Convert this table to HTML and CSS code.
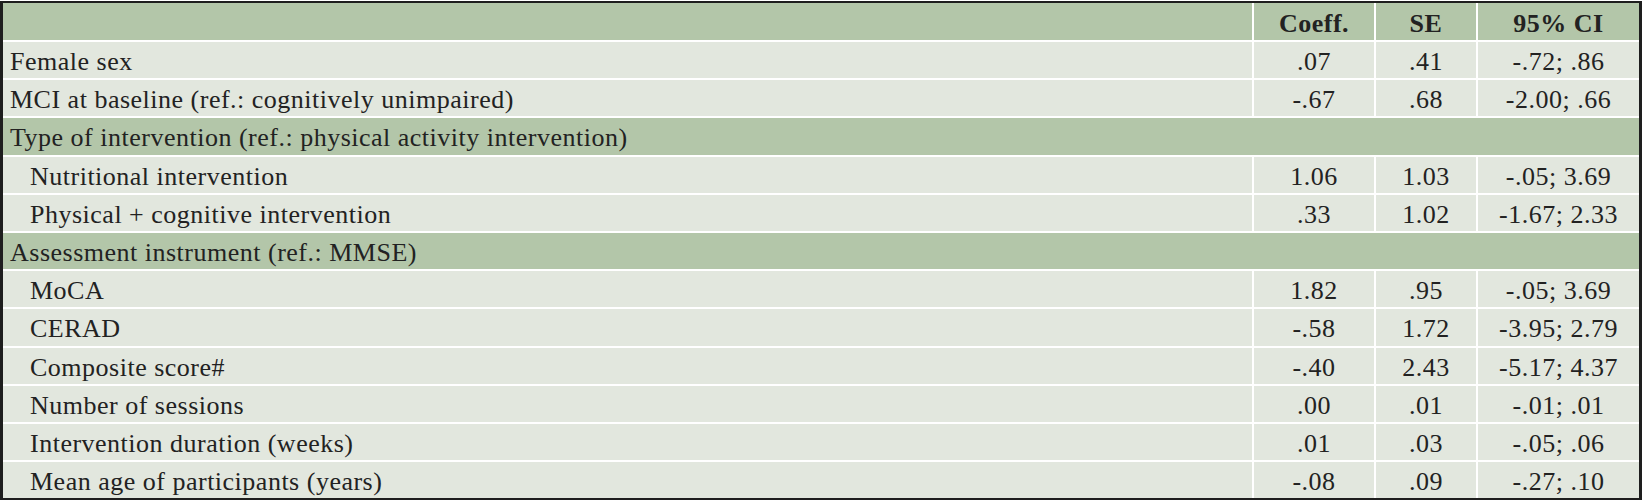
FILE: index.html
```html
<!DOCTYPE html>
<html>
<head>
<meta charset="utf-8">
<link rel="stylesheet" href="styles.css">
</head>
<body>
<div class="frame">
<table class="tbl">
  <colgroup>
    <col class="c-label">
    <col class="c-coef">
    <col class="c-se">
    <col class="c-ci">
  </colgroup>
  <thead>
    <tr class="head">
      <th class="label"></th>
      <th>Coeff.</th>
      <th>SE</th>
      <th>95% CI</th>
    </tr>
  </thead>
  <tbody>
    <tr><td class="label">Female sex</td><td>.07</td><td>.41</td><td>-.72; .86</td></tr>
    <tr><td class="label">MCI at baseline (ref.: cognitively unimpaired)</td><td>-.67</td><td>.68</td><td>-2.00; .66</td></tr>
    <tr class="section"><td class="label" colspan="4">Type of intervention (ref.: physical activity intervention)</td></tr>
    <tr><td class="label sub">Nutritional intervention</td><td>1.06</td><td>1.03</td><td>-.05; 3.69</td></tr>
    <tr><td class="label sub">Physical + cognitive intervention</td><td>.33</td><td>1.02</td><td>-1.67; 2.33</td></tr>
    <tr class="section"><td class="label" colspan="4">Assessment instrument (ref.: MMSE)</td></tr>
    <tr><td class="label sub">MoCA</td><td>1.82</td><td>.95</td><td>-.05; 3.69</td></tr>
    <tr><td class="label sub">CERAD</td><td>-.58</td><td>1.72</td><td>-3.95; 2.79</td></tr>
    <tr><td class="label sub">Composite score#</td><td>-.40</td><td>2.43</td><td>-5.17; 4.37</td></tr>
    <tr><td class="label sub">Number of sessions</td><td>.00</td><td>.01</td><td>-.01; .01</td></tr>
    <tr><td class="label sub">Intervention duration (weeks)</td><td>.01</td><td>.03</td><td>-.05; .06</td></tr>
    <tr><td class="label sub">Mean age of participants (years)</td><td>-.08</td><td>.09</td><td>-.27; .10</td></tr>
  </tbody>
</table>
</div>
</body>
</html>
```

FILE: styles.css
```css
html, body {
  margin: 0;
  padding: 0;
  background: #ffffff;
}

body {
  padding-top: 1px;
  font-family: "Liberation Serif", "Times New Roman", serif;
  font-size: 26px;
  letter-spacing: 0.5px;
  color: #222222;
}

.frame {
  width: 1642px;
  box-sizing: border-box;
  border-top: 2px solid #1e1e1e;
  border-left: 3px solid #1e1e1e;
  border-right: 3px solid #1e1e1e;
  border-bottom: 2px solid #1e1e1e;
}

.tbl {
  width: 100%;
  border-collapse: separate;
  border-spacing: 0;
  table-layout: fixed;
}

.c-label { width: 1249px; }
.c-coef { width: 122px; }
.c-se { width: 102px; }
.c-ci { width: 163px; }

.tbl th,
.tbl td {
  background: #e2e7de;
  height: 36.2px;
  box-sizing: border-box;
  padding: 4px 0 0 0;
  line-height: 32px;
  text-align: center;
  font-weight: normal;
  white-space: nowrap;
  border-top: 2px solid #ffffff;
  border-left: 2px solid #ffffff;
}

.tbl th.label,
.tbl td.label {
  border-left: none;
  text-align: left;
  padding-left: 7px;
}

.tbl td.sub {
  padding-left: 27px;
}

.head th {
  background: #b3c6a9;
  font-weight: bold;
  border-top: none;
  height: 37px;
}

.section td {
  background: #b3c6a9;
}

.tbl tbody tr td {
  height: 38.2px;
}
```
